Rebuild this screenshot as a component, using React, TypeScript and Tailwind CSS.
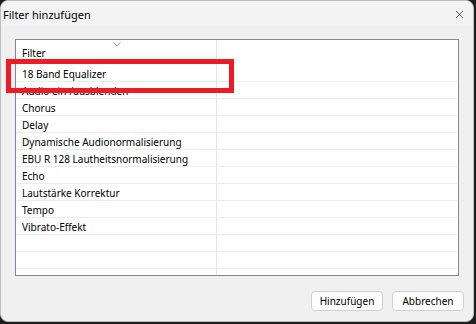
import { X } from "lucide-react";

const filters = [
  "18 Band Equalizer",
  "Audio ein-/ausblenden",
  "Chorus",
  "Delay",
  "Dynamische Audionormalisierung",
  "EBU R 128 Lautheitsnormalisierung",
  "Echo",
  "Lautstärke Korrektur",
  "Tempo",
  "Vibrato-Effekt",
];

const App = () => {
  const rows = [...filters, "", ""];

  return (
    <div
      className="w-[476px] h-[324px] bg-[#1e1e1e] relative overflow-hidden text-[10px] text-black"
      style={{ fontFamily: '"Noto Sans", "Open Sans", sans-serif' }}
    >
      <div className="w-[474px] h-[322px] bg-[#f0f0f0] rounded-[8px] border border-[#bdbdbd] flex flex-col overflow-hidden">
        {/* Title bar */}
        <div className="h-[25px] shrink-0 bg-[#f3f3f3] flex items-center justify-between pl-[2px] pr-[7px] pt-[2px]">
          <span className="leading-none text-[11px]">Filter hinzufügen</span>
          <X size={13} strokeWidth={1.2} className="text-[#1a1a1a]" />
        </div>

        {/* List */}
        <div className="mt-[13px] ml-[14px] w-[444px] h-[237px] border border-[#828790] bg-white flex flex-col">
          <div className="h-[25px] shrink-0 flex relative">
            <div className="w-[201px] border-r border-[#e5e5e5] flex items-center pl-[6px] pt-[1px]">
              Filter
            </div>
            <svg
              className="absolute left-[97px] top-[2px]"
              width="8"
              height="5"
              viewBox="0 0 8 5"
            >
              <path d="M0.5 0.5 L4 4 L7.5 0.5" fill="none" stroke="#9a9a9a" strokeWidth="1" />
            </svg>
          </div>
          {rows.map((name, i) => (
            <div key={i} className="h-[17px] shrink-0 flex border-b border-[#ececec] mr-[1px]">
              <div className="w-[201px] border-r border-[#e5e5e5] flex items-center pl-[6px] pt-[1px] whitespace-nowrap leading-none">
                {name}
              </div>
            </div>
          ))}
          <div className="flex-1 flex">
            <div className="w-[201px] border-r border-[#e5e5e5]" />
          </div>
        </div>

        {/* Buttons */}
        <div className="flex justify-end gap-[9px] mt-[15px] pr-[9px]">
          <button className="w-[72px] h-[20px] rounded-[4px] border border-[#d0d0d0] bg-[#fdfdfd] flex items-center justify-center leading-none">
            Hinzufügen
          </button>
          <button className="w-[72px] h-[20px] rounded-[4px] border border-[#d0d0d0] bg-[#fdfdfd] flex items-center justify-center leading-none">
            Abbrechen
          </button>
        </div>
      </div>

      {/* Red highlight */}
      <div className="absolute left-[6px] top-[59px] w-[228px] h-[34px] border-[5px] border-[#ed1c24]" />
    </div>
  );
};

export default App;
